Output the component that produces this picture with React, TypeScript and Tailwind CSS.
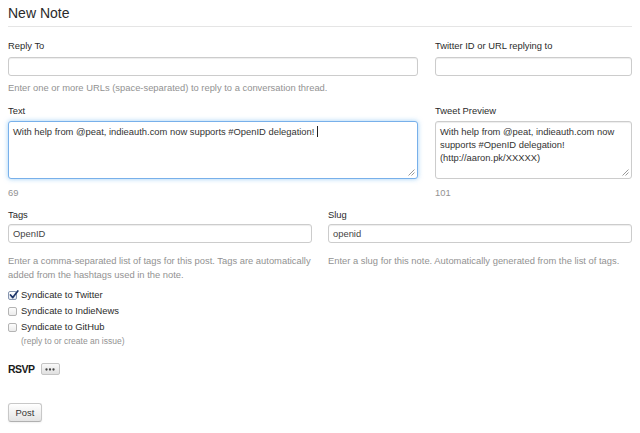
import React from "react";

function Grip() {
  return (
    <svg className="absolute right-[2px] bottom-[2px]" width="7" height="7" viewBox="0 0 7 7">
      <line x1="0.5" y1="6.5" x2="6.5" y2="0.5" stroke="#9a9a9a" strokeWidth="1" />
      <line x1="3.5" y1="6.5" x2="6.5" y2="3.5" stroke="#9a9a9a" strokeWidth="1" />
    </svg>
  );
}

function CheckRow({ checked, label }: { checked?: boolean; label: string }) {
  return (
    <div className="flex items-center h-[16px]">
      <span
        className={
          checked
            ? "relative w-[9px] h-[9px] border border-[#8796b0] rounded-[2px] bg-gradient-to-b from-white to-[#e2e7ef]"
            : "relative w-[9px] h-[9px] border border-[#b4b4b4] rounded-[2px] bg-gradient-to-b from-[#fdfdfd] to-[#ebebeb]"
        }
      >
        {checked && (
          <svg className="absolute left-[0px] top-[-2px]" width="10" height="10" viewBox="0 0 10 10">
            <path d="M1.5 5 L3.8 7.6 L8.8 1" fill="none" stroke="#1d3569" strokeWidth="1.7" strokeLinecap="round" strokeLinejoin="round" />
          </svg>
        )}
      </span>
      <span className="ml-[4px] text-[9.4px] leading-[12px] text-[#2a2a2a]">{label}</span>
    </div>
  );
}

const inputCls =
  "h-[19px] border border-[#cccccc] rounded-[3px] bg-white shadow-[inset_0_1px_1px_rgba(0,0,0,0.075)] px-[4px] text-[9.4px] leading-[17px] text-[#444] flex items-center";

export default function App() {
  return (
    <div className="w-[640px] h-[433px] overflow-hidden bg-white px-[8px] text-[#2a2a2a] font-['Liberation_Sans',Arial,sans-serif]">
      <h1 className="pt-[4px] h-[22px] text-[14px] leading-[18px] font-normal text-[#2a2a2a]">New Note</h1>
      <div className="mt-[4px] border-t border-[#e5e5e5]" />

      {/* Reply row */}
      <div className="mt-[13px] grid grid-cols-[410px_197px] gap-x-[17px]">
        <div className="flex flex-col">
          <div className="text-[9.4px] leading-[12px] h-[12px] mb-[5px]">Reply To</div>
          <div className={inputCls}></div>
          <div className="mt-[5px] text-[9.4px] leading-[14px] text-[#929292] whitespace-nowrap">
            Enter one or more URLs (space-separated) to reply to a conversation thread.
          </div>
        </div>
        <div className="flex flex-col">
          <div className="text-[9.4px] leading-[12px] h-[12px] mb-[5px]">Twitter ID or URL replying to</div>
          <div className={inputCls}></div>
        </div>
      </div>

      {/* Text row */}
      <div className="mt-[10px] grid grid-cols-[410px_197px] gap-x-[17px]">
        <div className="flex flex-col">
          <div className="text-[9.4px] leading-[12px] h-[12px] mb-[4px]">Text</div>
          <div className="relative h-[58px] border border-[#78b0ea] rounded-[3px] bg-white shadow-[0_0_5px_rgba(82,168,236,0.55)] px-[4px] pt-[3px] text-[9.4px] leading-[13px] text-[#333] whitespace-nowrap">
            With help from @peat, indieauth.com now supports #OpenID delegation!
            <span className="inline-block align-[-2px] ml-[3px] w-[1px] h-[11px] bg-[#222]" />
            <Grip />
          </div>
          <div className="mt-[8px] text-[9.4px] leading-[12px] text-[#929292]">69</div>
        </div>
        <div className="flex flex-col">
          <div className="text-[9.4px] leading-[12px] h-[12px] mb-[4px]">Tweet Preview</div>
          <div className="relative h-[58px] border border-[#cccccc] rounded-[3px] bg-white shadow-[inset_0_1px_1px_rgba(0,0,0,0.075)] px-[4px] pt-[3px] text-[9.4px] leading-[13px] text-[#333] whitespace-nowrap">
            <div>With help from @peat, indieauth.com now</div>
            <div>supports #OpenID delegation!</div>
            <div>(http://aaron.pk/XXXXX)</div>
            <Grip />
          </div>
          <div className="mt-[8px] text-[9.4px] leading-[12px] text-[#929292]">101</div>
        </div>
      </div>

      {/* Tags / Slug */}
      <div className="mt-[10px] grid grid-cols-2 gap-x-[16px]">
        <div className="flex flex-col">
          <div className="text-[9.4px] leading-[12px] h-[12px] mb-[3px]">Tags</div>
          <div className={inputCls}>OpenID</div>
          <div className="mt-[11px] text-[9.4px] leading-[14px] text-[#929292] whitespace-nowrap">
            Enter a comma-separated list of tags for this post. Tags are automatically
            <br />
            added from the hashtags used in the note.
          </div>
        </div>
        <div className="flex flex-col">
          <div className="text-[9.4px] leading-[12px] h-[12px] mb-[3px]">Slug</div>
          <div className={inputCls}>openid</div>
          <div className="mt-[11px] text-[9.4px] leading-[14px] text-[#929292] whitespace-nowrap">
            Enter a slug for this note. Automatically generated from the list of tags.
          </div>
        </div>
      </div>

      {/* Checkboxes */}
      <div className="mt-[5px] flex flex-col">
        <CheckRow checked label="Syndicate to Twitter" />
        <CheckRow label="Syndicate to IndieNews" />
        <CheckRow label="Syndicate to GitHub" />
        <div className="pl-[13px] text-[8.5px] leading-[12px] text-[#929292]">(reply to or create an issue)</div>
      </div>

      {/* RSVP */}
      <div className="mt-[15px] h-[14px] flex items-center">
        <span className="text-[10.5px] leading-[14px] font-bold text-[#1a1a1a] tracking-[-0.5px]">RSVP</span>
        <span className="ml-[6px] w-[19px] h-[12px] border border-[#c4c4c4] rounded-[2px] bg-gradient-to-b from-[#fafafa] to-[#e0e0e0] flex items-center justify-center">
          <svg width="10" height="3" viewBox="0 0 10 3">
            <circle cx="1.5" cy="1.5" r="1.15" fill="#444" />
            <circle cx="5" cy="1.5" r="1.15" fill="#444" />
            <circle cx="8.5" cy="1.5" r="1.15" fill="#444" />
          </svg>
        </span>
      </div>

      {/* Post */}
      <div className="mt-[27px]">
        <button className="w-[34px] h-[19px] border border-[#c8c8c8] border-b-[#b0b0b0] rounded-[3px] bg-gradient-to-b from-white to-[#e4e4e4] shadow-[0_1px_2px_rgba(0,0,0,0.06)] text-[9.4px] leading-[17px] text-[#333] flex items-center justify-center">
          Post
        </button>
      </div>
    </div>
  );
}
